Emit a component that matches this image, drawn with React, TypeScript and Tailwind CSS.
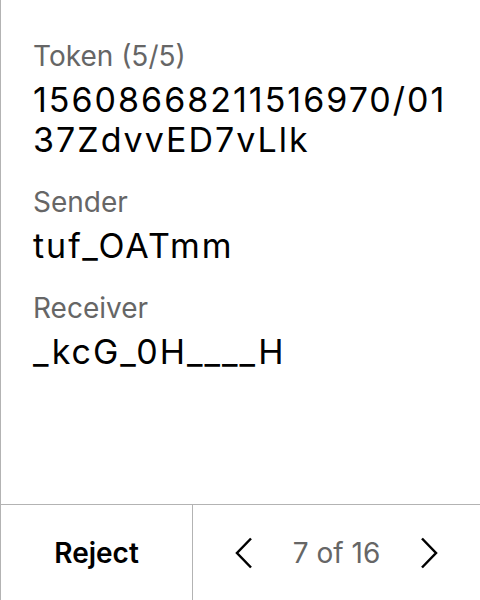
import React from "react";

function Field({ label, value }: { label: string; value: string }) {
  return (
    <div className="flex flex-col">
      <div className="text-[28px] leading-[32px] text-[#666666]">{label}</div>
      <div className="mt-[8px] text-[34px] leading-[40px] tracking-[2px] text-black break-all">{value}</div>
    </div>
  );
}

export default function App() {
  return (
    <div
      className="w-[480px] h-[600px] bg-white flex flex-col border-l border-[#b3b3b3]"
      style={{ fontFamily: "Inter, 'Noto Sans', sans-serif" }}
    >
      <div className="flex-1 flex flex-col gap-[26px] pl-[32px] pr-[26px] pt-[40px]">
        <Field label="Token (5/5)" value="15608668211516970/0137ZdvvED7vLlk" />
        <Field label="Sender" value="tuf_OATmm" />
        <Field label="Receiver" value="_kcG_0H____H" />
      </div>
      <div className="h-[96px] border-t border-[#b3b3b3] flex">
        <button className="w-[192px] border-r border-[#b3b3b3] flex items-center justify-center text-[28px] font-semibold text-black">
          Reject
        </button>
        <div className="flex-1 flex items-center justify-center gap-[40px]">
          <svg width="18" height="32" viewBox="0 0 18 32" fill="none" stroke="black" strokeWidth="2.5">
            <path d="M16 1.5 L2 16 L16 30.5" />
          </svg>
          <span className="text-[28px] text-[#666666]">7 of 16</span>
          <svg width="18" height="32" viewBox="0 0 18 32" fill="none" stroke="black" strokeWidth="2.5">
            <path d="M2 1.5 L16 16 L2 30.5" />
          </svg>
        </div>
      </div>
    </div>
  );
}
